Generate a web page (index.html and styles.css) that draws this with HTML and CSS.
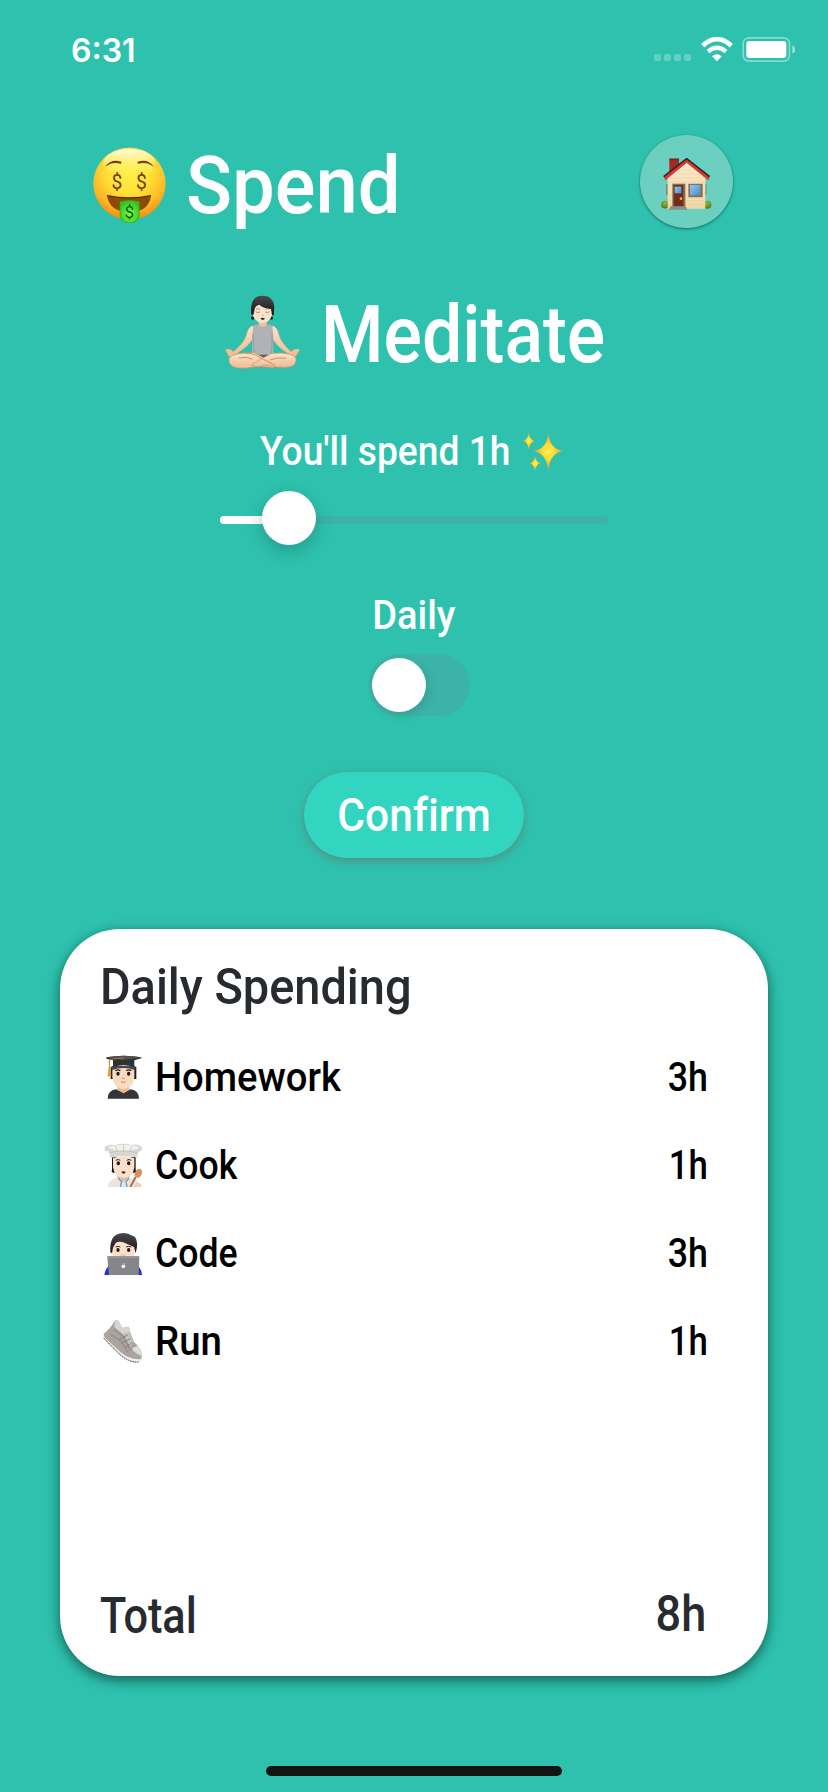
FILE: index.html
```html
<!DOCTYPE html>
<html lang="en">
<head>
<meta charset="utf-8">
<title>Spend</title>
<link rel="stylesheet" href="styles.css">
</head>
<body>
<main class="screen">
  <div class="status">
    <span class="time">6:31</span>
    <div class="indicators">
      <div class="dots"><i></i><i></i><i></i><i></i></div>
      <svg class="wifi" viewBox="299 51 96 73" width="32" height="24.3">
        <path d="M304 77Q347 38 390 77" fill="none" stroke="#fff" stroke-width="14"/>
        <path d="M320 95Q347 72 374 95" fill="none" stroke="#fff" stroke-width="13"/>
        <path d="M332 109Q347 97 361 109L347 124Z" fill="#fff"/>
      </svg>
      <svg class="battery" viewBox="422 51 160 75" width="53.3" height="25">
        <rect x="425.500" y="53.500" width="139" height="70" rx="17" fill="none" stroke="#fff" stroke-opacity=".42" stroke-width="5"/>
        <rect x="435" y="63" width="120" height="51" rx="9" fill="#fff"/>
        <path d="M573 76Q582 80 582 88.500Q582 97 573 101Z" fill="#fff" fill-opacity=".5"/>
      </svg>
    </div>
  </div>

  <header class="header">
    <div class="brand">
      <svg viewBox="158 380 220 230" width="73.3" height="76.700">
        <defs>
          <radialGradient id="face" cx=".5" cy=".32" r=".68">
            <stop offset="0" stop-color="#fff04a"/><stop offset=".45" stop-color="#ffe135"/>
            <stop offset=".78" stop-color="#fdb827"/><stop offset="1" stop-color="#ee8d12"/>
          </radialGradient>
          <linearGradient id="shine" x1="0" y1="0" x2="0" y2="1">
            <stop offset="0" stop-color="#fffef0" stop-opacity=".95"/><stop offset="1" stop-color="#fff45a" stop-opacity="0"/>
          </linearGradient>
          <radialGradient id="tongue" cx=".5" cy=".6" r=".6">
            <stop offset="0" stop-color="#7dff4c"/><stop offset="1" stop-color="#2fc21f"/>
          </radialGradient>
        </defs>
        <circle cx="267.500" cy="490" r="108.500" fill="url(#face)"/>
        <ellipse cx="267" cy="428" rx="78" ry="42" fill="url(#shine)"/>
        <path d="M195 438Q212 414 243 424Q245 428 241 430Q216 423 197 438ZM340 438Q323 414 292 424Q290 428 294 430Q319 423 338 438Z" fill="#7a3d0b"/>
        <path d="M200 526Q267 540 332 526Q326 574 267 576Q208 574 200 526Z" fill="#8d4b08"/>
        <path d="M200 526Q267 540 332 526" fill="none" stroke="#5c2b05" stroke-width="4"/>
        <path d="M239 544Q267 537 297 544V580Q297 607 268 608Q239 607 239 580Z" fill="url(#tongue)" stroke="#2fa91c" stroke-width="2"/>
        <g class="dollar">
          <text x="230" y="505" font-size="58">$</text><text x="303" y="505" font-size="58">$</text>
          <text x="267" y="592" font-size="52" class="dollar-green">$</text>
        </g>
      </svg>
      <h1 class="title title-spend">Spend</h1>
    </div>
    <button class="home" aria-label="Home">
      <svg viewBox="182 412 152 156" width="50.700" height="52">
        <defs>
          <linearGradient id="glass" x1="0" y1="0" x2="1" y2="1"><stop offset="0" stop-color="#8cc8ef"/><stop offset="1" stop-color="#4b8ccb"/></linearGradient>
          <linearGradient id="wall" x1="0" y1="0" x2="0" y2="1"><stop offset="0" stop-color="#fbe9cb"/><stop offset="1" stop-color="#efd7a8"/></linearGradient>
          <radialGradient id="bush" cx=".5" cy=".3" r=".7"><stop offset="0" stop-color="#94b53b"/><stop offset="1" stop-color="#4b7a1c"/></radialGradient>
        </defs>
        <rect x="207" y="414" width="29" height="44" fill="#a92a21"/><rect x="207" y="414" width="29" height="5" fill="#6f2620"/>
        <circle cx="194" cy="552" r="11.500" fill="url(#bush)"/><circle cx="321" cy="552" r="12" fill="url(#bush)"/>
        <path d="M198 490h4v34h-4zM315 490h3v34h-3z" fill="#8a6a4e"/>
        <path d="M202 471L259 423L315 471V564H202Z" fill="url(#wall)"/>
        <path d="M205 484H312M205 472H312M215 460H303M226 448H291M205 540H312M205 552H312" stroke="#e6cfa3" stroke-width="1.500"/>
        <path d="M194 476L259 423L324 476" fill="none" stroke="#9a7552" stroke-width="5"/>
        <path d="M190 468L259 413L328 468L324 478L259 426L195 478Z" fill="#e0362e"/>
        <path d="M190 468L259 414L328 468" fill="none" stroke="#262a33" stroke-width="5"/>
        <rect x="216" y="489" width="39" height="70" fill="#8a6b55"/><rect x="220" y="493" width="29" height="64" fill="#6f2e1d"/>
        <rect x="223" y="498" width="20" height="20" fill="url(#glass)"/><circle cx="242" cy="534" r="4" fill="#f2b233"/>
        <path d="M210 557H256L261 567H206Z" fill="#918a83"/>
        <rect x="264" y="489" width="43" height="41" rx="2" fill="#8b6f5c"/><rect x="269" y="493" width="31" height="31" fill="url(#glass)"/>
      </svg>
    </button>
  </header>

  <div class="activity">
    <svg viewBox="72 44 230 222" width="76.700" height="74">
      <defs>
        <linearGradient id="skin" x1="0" y1="0" x2="0" y2="1"><stop offset="0" stop-color="#fbe3cb"/><stop offset="1" stop-color="#eebb94"/></linearGradient>
        <linearGradient id="hair" x1="0" y1="0" x2="0" y2="1"><stop offset="0" stop-color="#4a4a4c"/><stop offset="1" stop-color="#141416"/></linearGradient>
      </defs>
      <path d="M176 112H200V134L214 140H162L176 134Z" fill="#eec29f"/>
      <path d="M160 136Q144 138 139 164Q133 186 106 209L100 214Q92 203 78 207Q73 210 79 213L86 228Q94 232 101 226L116 216Q145 198 156 179L164 142Z" fill="url(#skin)" stroke="#d99d72" stroke-width="1.500"/>
      <path d="M216 136Q232 138 237 164Q243 186 268 209L274 214Q282 203 297 207Q302 210 296 213L288 228Q280 232 273 226L258 216Q231 198 220 179L212 142Z" fill="url(#skin)" stroke="#d99d72" stroke-width="1.500"/>
      <path d="M160 136Q166 132 174 133Q188 145 202 133Q210 132 217 136L220 170V222Q188 238 156 222V170Z" fill="#b1b2b4"/>
      <path d="M160 160Q158 190 164 221M216 160Q218 190 213 221" fill="none" stroke="#9a9b9e" stroke-width="3"/>
      <path d="M172 223H204L198 255H180Z" fill="#515866"/>
      <path d="M88 233Q94 221 133 218L163 217Q190 231 226 253L220 263Q180 256 155 261Q107 270 90 252Q85 242 88 233Z" fill="url(#skin)" stroke="#cf8f61" stroke-width="2"/>
      <path d="M287 233Q282 221 243 218L216 219Q187 232 154 254Q168 263 194 254Q267 270 284 252Q290 242 287 233Z" fill="url(#skin)" stroke="#cf8f61" stroke-width="2"/>
      <path d="M134 219Q160 217 179 231L225 255M116 233Q138 228 158 236M258 234Q234 229 210 239" fill="none" stroke="#cf8f61" stroke-width="3"/>
      <ellipse cx="158" cy="113" rx="5" ry="5" fill="#18181a"/><ellipse cx="214" cy="113" rx="5" ry="5" fill="#18181a"/>
      <path d="M157 80Q157 56 187 56Q217 57 217 86V103Q209 126 188 128Q166 126 158 104Z" fill="#fbe3cb"/>
      <path d="M154 103Q149 57 174 48Q219 38 223 79L221 105H216L213 86Q190 84 178 73Q169 75 165 82L160 104Z" fill="url(#hair)"/>
      <path d="M167 94Q173 99 180 95M196 95Q203 99 209 94M168 87Q174 83 180 87M196 87Q203 83 208 87M186 104Q188 107 190 104" fill="none" stroke="#8f6754" stroke-width="2"/>
      <path d="M181 114Q188 111 195 114Q192 119 188 119Q184 119 181 114Z" fill="#34282b"/>
    </svg>
    <h2 class="title title-activity">Meditate</h2>
  </div>

  <div class="amount">
    <span class="amount-text">You'll spend 1h</span>
    <svg viewBox="970 65 123 118" width="41" height="39.300">
      <defs><radialGradient id="spark"><stop offset="0" stop-color="#fff04c"/><stop offset=".4" stop-color="#ffdb32"/><stop offset="1" stop-color="#f0942e"/></radialGradient></defs>
      <g fill="url(#spark)">
        <path d="M1046 67Q1049 116 1091 122Q1049 129 1046 182Q1042 129 1001 122Q1042 116 1046 67Z"/>
        <path d="M987 66Q989 89 1006 92Q989 95 987 118Q985 95 970 92Q985 89 987 66Z"/>
        <path d="M1006 136Q1008 156 1024 159Q1008 162 1006 182Q1004 162 989 159Q1004 156 1006 136Z"/>
      </g>
    </svg>
  </div>

  <div class="slider"><div class="track"><div class="fill"></div></div><div class="knob slider-knob"></div></div>

  <div class="daily">Daily</div>
  <div class="toggle"><div class="knob"></div></div>
  <button class="confirm"><span class="confirm-label">Confirm</span></button>

  <section class="card">
    <h3 class="card-title">Daily Spending</h3>
    <ul class="list">
      <li class="item">
        <svg viewBox="39 46 120 132" width="40" height="44">
          <path d="M53 177Q53 153 78 149L100 159L122 149Q147 153 147 177Z" fill="#353538"/>
          <path d="M82 142H118V150L101 161L82 150Z" fill="#e8b990"/>
          <path d="M62 82H139V118H62Z" fill="#1f1f21"/>
          <path d="M67 88Q100 73 133 88V112Q132 143 100 149Q68 143 67 112Z" fill="#f9dcc0"/>
          <path d="M65 79H136V92Q100 78 65 92Z" fill="#47484b"/>
          <path d="M49 53Q101 43 154 53V56L133 62V82Q101 72 69 82V62L49 57Z" fill="#303134"/>
          <path d="M49 53Q101 43 154 53L101 61Z" fill="#505154"/>
          <path d="M101 55L58 59V88" fill="none" stroke="#b97a20" stroke-width="3"/><path d="M55 86H61L64 109Q58 113 53 109Z" fill="#e6a02c"/>
          <path d="M76 93Q84 88 91 93M109 93Q117 88 124 93" fill="none" stroke="#281b17" stroke-width="4"/>
          <ellipse cx="84" cy="102" rx="5" ry="6" fill="#291713"/><ellipse cx="116" cy="102" rx="5" ry="6" fill="#291713"/>
          <path d="M93 126Q100 131 107 126M96 115Q100 118 104 115" fill="none" stroke="#b76f52" stroke-width="2.500"/>
        </svg>
        <span class="name homework">Homework</span><span class="hours">3h</span>
      </li>
      <li class="item">
        <svg viewBox="39 309 120 132" width="40" height="44">
          <path d="M54 441Q53 421 78 415L101 423L124 415Q147 419 147 441Z" fill="#e7e6e3"/>
          <path d="M82 403H119V416L101 426L82 416Z" fill="#e9bd98"/>
          <path d="M66 351H137V391Q141 396 134 398H70Q62 396 66 391Z" fill="#18181a"/>
          <path d="M69 354Q101 344 133 354V382Q130 411 101 414Q73 411 69 382Z" fill="#fbe1c9"/>
          <path d="M61 352L56 334Q39 335 45 320Q54 312 76 315Q101 307 124 315Q146 311 155 320Q160 333 145 335L141 353Q100 342 61 354Z" fill="#d8d7d3"/>
          <path d="M55 320Q101 309 148 320Q145 331 101 332Q58 331 55 320Z" fill="#f2f1ed"/>
          <path d="M76 318L84 336M101 314V337M126 318L119 336M59 338Q101 328 143 338" fill="none" stroke="#b9b9b6" stroke-width="2"/>
          <path d="M77 361Q85 356 91 361M110 361Q117 356 124 361" fill="none" stroke="#3d2b25" stroke-width="3"/>
          <ellipse cx="85" cy="370" rx="5" ry="6" fill="#291713"/><ellipse cx="116" cy="370" rx="5" ry="6" fill="#291713"/>
          <path d="M94 396Q101 392 107 396Q104 401 101 401Q97 401 94 396Z" fill="#342622"/>
          <path d="M85 415L95 425L91 441M117 415L108 425L111 441" fill="none" stroke="#5d9ed6" stroke-width="4"/>
          <path d="M121 441L137 411" stroke="#bd6b3c" stroke-width="6"/><ellipse cx="145" cy="400" rx="10" ry="14" transform="rotate(25 145 400)" fill="#d9915a"/>
          <path d="M129 441L140 427L155 432L153 441Z" fill="#f3ceb0"/>
        </svg>
        <span class="name cook">Cook</span><span class="hours one">1h</span>
      </li>
      <li class="item">
        <svg viewBox="39 63 120 132" width="40" height="44">
          <path d="M43 195Q46 173 61 164H139Q154 173 156 195Z" fill="#2830c8"/>
          <path d="M67 97H134V132Q129 149 100 151Q73 149 67 132Z" fill="#fbe1c9"/>
          <path d="M61 127Q58 77 87 71Q110 65 127 77Q143 80 141 111L137 130L132 111Q115 104 100 97Q86 92 77 99L69 113L66 130Z" fill="url(#hair)"/>
          <path d="M77 111Q85 107 91 111M108 111Q116 107 124 111" fill="none" stroke="#3d2b25" stroke-width="3"/>
          <ellipse cx="84" cy="120" rx="5" ry="6" fill="#291713"/><ellipse cx="116" cy="120" rx="5" ry="6" fill="#291713"/>
          <path d="M92 134Q100 137 107 134" fill="none" stroke="#d99575" stroke-width="2"/>
          <path d="M55 138H145Q148 138 148 142L146 195H57L52 142Q52 138 55 138Z" fill="#85868a"/><path d="M52 141H148" stroke="#a7a8ab" stroke-width="3"/>
          <path d="M100 165Q94 163 94 169Q95 175 99 175L102 174Q106 173 106 169Q103 168 105 164Q102 163 100 165ZM100 163Q99 160 103 159Q104 162 100 163Z" fill="#fff"/>
        </svg>
        <span class="name code">Code</span><span class="hours">3h</span>
      </li>
      <li class="item">
        <svg viewBox="39 327 120 132" width="40" height="44">
          <path d="M41 371Q59 358 75 332Q83 327 86 334Q91 347 98 354L115 350Q120 354 120 365L132 396Q155 416 156 436L153 449Q116 456 91 430L42 384Z" fill="#aaa39f"/>
          <path d="M75 332Q83 327 86 334Q91 347 98 354L115 350Q120 354 120 366L99 373L73 350Z" fill="#d6d3d0"/>
          <path d="M99 374L119 366L131 396L121 410Z" fill="#c5c1bd"/><path d="M128 413L144 407Q157 422 156 438Q143 435 128 421Z" fill="#dddbd8"/>
          <path d="M72 359L102 381L122 423M62 373L94 394L113 426M88 388L113 375M95 400L121 386M106 412L128 397" fill="none" stroke="#89817d" stroke-width="3"/>
          <path d="M39 370Q39 378 49 387L92 427Q119 451 155 447L154 455Q117 463 87 435L45 394Q37 381 39 370Z" fill="#f0f0ef"/>
          <path d="M41 384L87 431Q117 459 146 456" fill="none" stroke="#45413f" stroke-width="3" stroke-dasharray="5 2"/>
        </svg>
        <span class="name run">Run</span><span class="hours one">1h</span>
      </li>
    </ul>
    <div class="total"><span class="total-label">Total</span><span class="total-hours">8h</span></div>
  </section>
  <div class="indicator"></div>
</main>
</body>
</html>
```
FILE: styles.css
```css
* { box-sizing: border-box; }
body { margin: 0; background: #2ec2ae; font-family: Roboto, "Noto Sans", sans-serif; font-weight: 500; color: #fff; font-variant-ligatures: none; }
svg { display: block; flex: none; }
h1, h2, h3, ul { margin: 0; padding: 0; font-weight: 500; list-style: none; }
button { border: 0; padding: 0; font: inherit; font-variant-ligatures: none; color: inherit; }
.screen { width: 828px; height: 1792px; display: flex; flex-direction: column; align-items: center; overflow: hidden; }

.status { width: 100%; height: 135px; padding: 37px 33px 0 71px; display: flex; justify-content: space-between; align-items: flex-start; flex: none; }
.time { font: 600 32px/27px Inter, sans-serif; }
.indicators { display: flex; align-items: flex-start; }
.dots { display: flex; gap: 3px; padding-top: 17px; margin-right: 10px; }
.dots i { width: 7px; height: 7px; border-radius: 2px; background: rgba(255, 255, 255, .25); }
.wifi { margin-right: 9px; }

.header { width: 100%; height: 93px; padding: 0 95px 0 93px; display: flex; justify-content: space-between; align-items: center; flex: none; }
.brand { display: flex; align-items: center; gap: 20px; padding-top: 7px; }
.title { font-size: 80px; line-height: 80px; white-space: nowrap; transform-origin: left; }
.title-spend { padding-top: 2px; transform: scaleX(.95); }
.dollar { font-family: Roboto, sans-serif; font-weight: 400; text-anchor: middle; fill: #743a08; }
.dollar-green { fill: #145c10; }
.home { width: 93px; height: 93px; border-radius: 50%; background: #6bd0c0; display: flex; align-items: center; justify-content: center; padding-top: 4px; box-shadow: 0 1px 3px rgba(0, 50, 45, .6); }

.activity { width: 100%; height: 80px; margin-top: 67px; padding-left: 224px; display: flex; gap: 20px; flex: none; }
.title-activity { transform: scaleX(.895); }

.amount { width: 100%; height: 40px; margin-top: 57px; padding-left: 260px; display: flex; font-size: 40px; line-height: 40px; white-space: nowrap; flex: none; }
.amount-text { width: 263px; flex: none; transform: scaleX(.93); transform-origin: left; }

.slider { position: relative; width: 388px; height: 54px; margin-top: 19px; padding-top: 25px; flex: none; }
.track { height: 8px; border-radius: 4px; background: #3eb2a6; overflow: hidden; }
.fill { width: 68px; height: 8px; background: #fff; }
.knob { width: 54px; height: 54px; border-radius: 50%; background: #fff; box-shadow: 3px 4px 9px rgba(40, 90, 85, .2); }
.slider-knob { position: absolute; left: 42px; top: 0; box-shadow: 0 6px 18px rgba(20, 70, 65, .32); }

.daily { height: 40px; margin-top: 51px; font-size: 40px; line-height: 40px; transform: scaleX(.95); flex: none; }
.toggle { width: 102px; height: 62px; margin: 18px 0 0 10px; padding: 4px; border-radius: 31px; background: #3cb3a7; flex: none; }
.confirm { width: 220px; height: 86px; margin-top: 56px; border-radius: 43px; background: #31d5c0; font-size: 45.5px; line-height: 84px; padding-top: 2px; box-shadow: 0 3px 10px rgba(105, 115, 110, .65); flex: none; }
.confirm-label { display: inline-block; transform: scaleX(.935); }

.card { width: 708px; height: 747px; margin-top: 71px; padding: 33px 60px 0 40px; border-radius: 60px; background: #fff; color: #000; box-shadow: 0 4px 13px rgba(10, 70, 60, .8); flex: none; }
.card-title { font-size: 50px; line-height: 50px; color: #272b30; transform: scaleX(.938); transform-origin: left; }
.list { margin-top: 21px; padding-left: 3px; }
.item { height: 88px; display: flex; align-items: center; font-size: 40px; line-height: 40px; }
.name { margin-left: 12px; padding-top: 2px; transform-origin: left; }
.homework { transform: scaleX(.955); }
.cook, .code { transform: scaleX(.89); }
.run { transform: scaleX(.96); }
.hours { margin-left: auto; padding-top: 2px; transform: scaleX(.895); transform-origin: right; }
.hours.one { transform: scaleX(.87); }
.total { display: flex; justify-content: space-between; margin-top: 206px; padding-right: 2px; font-size: 50px; line-height: 50px; color: #272b30; }
.total-label { transform: scaleX(.865); transform-origin: left; }
.total-hours { margin-top: -2px; transform: scaleX(.9); transform-origin: right; }
.indicator { width: 296px; height: 10px; margin-top: 90px; border-radius: 5px; background: #121212; flex: none; }
```
